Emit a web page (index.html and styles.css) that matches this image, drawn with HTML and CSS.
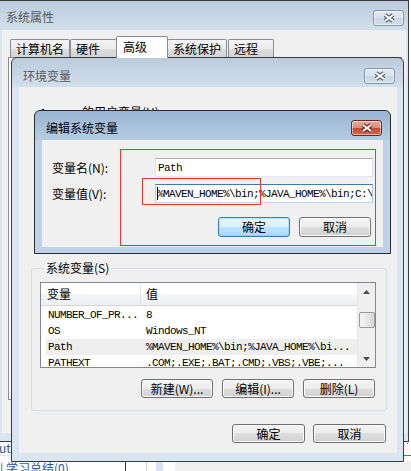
FILE: index.html
```html
<!DOCTYPE html>
<html lang="zh-CN">
<head>
<meta charset="utf-8">
<title>编辑系统变量</title>
<link rel="stylesheet" href="styles.css">
</head>
<body>
<div class="desktop">
  <div class="page">
    <div class="page-row1">
      <span class="page-link uts">uts</span>
      <span class="page-mark"><span class="page-dot"></span></span>
    </div>
    <div class="page-row2">
      <span class="page-link cell-a">| 学习总结(0)</span>
      <span class="cell-b"></span>
      <span class="cell-c"></span>
      <span class="cell-d"></span>
      <span class="cell-e"></span>
    </div>
  </div>

  <section class="win win-outer">
    <header class="titlebar">
      <span class="title">系统属性</span>
      <span class="close">
        <svg width="14" height="10" viewBox="0 0 14 10"><path d="M3 2 L11 8 M11 2 L3 8" stroke="#56606e" stroke-width="4.2"/><path d="M3 2 L11 8 M11 2 L3 8" stroke="#fff" stroke-width="2"/></svg>
      </span>
    </header>
    <div class="client outer-client">
      <div class="tabs">
        <span class="tab t1">计算机名</span>
        <span class="tab t2">硬件</span>
        <span class="tab t3 sel">高级</span>
        <span class="tab t4">系统保护</span>
        <span class="tab t5">远程</span>
      </div>
      <div class="tabpanel"></div>
    </div>
  </section>

  <section class="win win-env">
    <header class="titlebar">
      <span class="title">环境变量</span>
      <span class="close">
        <svg width="14" height="10" viewBox="0 0 14 10"><path d="M3 2 L11 8 M11 2 L3 8" stroke="#56606e" stroke-width="4.2"/><path d="M3 2 L11 8 M11 2 L3 8" stroke="#fff" stroke-width="2"/></svg>
      </span>
    </header>
    <div class="client env-client">
      <div class="user-group"><span class="mono">lenovo </span>的用户变量(U)</div>
      <fieldset class="sys-group">
        <legend>系统变量(S)</legend>
        <div class="listview">
          <div class="lv-main">
            <div class="lv-head">
              <span class="lv-h1">变量</span>
              <span class="lv-h2">值</span>
            </div>
            <div class="lv-rows">
              <div class="lv-row"><span>NUMBER_OF_PR...</span><span>8</span></div>
              <div class="lv-row"><span>OS</span><span>Windows_NT</span></div>
              <div class="lv-row hl"><span>Path</span><span>%MAVEN_HOME%\bin;%JAVA_HOME%\bi...</span></div>
              <div class="lv-row"><span>PATHEXT</span><span>.COM;.EXE;.BAT;.CMD;.VBS;.VBE;...</span></div>
            </div>
          </div>
          <div class="scrollbar">
            <span class="sb-btn"><svg width="7" height="4" viewBox="0 0 7 4"><path d="M0 4 L3.5 0 L7 4 Z" fill="#4d4d4d"/></svg></span>
            <span class="sb-track"><span class="sb-thumb"></span></span>
            <span class="sb-btn"><svg width="7" height="4" viewBox="0 0 7 4"><path d="M0 0 L7 0 L3.5 4 Z" fill="#4d4d4d"/></svg></span>
          </div>
        </div>
        <div class="btn-row group-btns">
          <span class="btn">新建(W)...</span>
          <span class="btn">编辑(I)...</span>
          <span class="btn">删除(L)</span>
        </div>
      </fieldset>
      <div class="btn-row env-btns">
        <span class="btn wide">确定</span>
        <span class="btn wide">取消</span>
      </div>
    </div>
  </section>

  <section class="win win-edit">
    <header class="titlebar">
      <span class="title">编辑系统变量</span>
      <span class="close red">
        <svg width="14" height="10" viewBox="0 0 14 10"><path d="M3 2 L11 8 M11 2 L3 8" stroke="#6a2a22" stroke-width="4.2"/><path d="M3 2 L11 8 M11 2 L3 8" stroke="#fff" stroke-width="2"/></svg>
      </span>
    </header>
    <div class="client edit-client">
      <div class="form">
        <span class="label">变量名(N):</span>
        <span class="input"><span class="mono">Path</span></span>
        <span class="label">变量值(V):</span>
        <span class="input focus"><span class="caret"></span><span class="mono">%MAVEN_HOME%\bin;%JAVA_HOME%\bin;C:\Windows\system32</span></span>
      </div>
      <div class="btn-row edit-btns">
        <span class="btn default">确定</span>
        <span class="btn">取消</span>
      </div>
    </div>
  </section>

  <div class="annot annot-big"></div>
  <div class="annot annot-small"></div>
</div>
</body>
</html>
```

FILE: styles.css
```css
* { box-sizing: border-box; }
html, body { margin: 0; padding: 0; background: #fff; overflow: hidden; }
body {
  width: 411px; height: 471px;
  font-family: "Noto Sans CJK SC", "Liberation Sans", sans-serif;
  font-size: 12px; color: #000;
}
.desktop { position: relative; width: 411px; height: 471px; overflow: hidden; }
.mono {
  font-family: "Liberation Mono", "DejaVu Sans Mono", monospace;
  font-size: 11px; letter-spacing: -0.6px;
}

/* background web page */
.page { display: flex; flex-direction: column; padding-top: 442px; }
.page-row1 { height: 14px; display: flex; justify-content: space-between; border-bottom: 1px solid #e4e4e4; }
.page-link { color: #2a57a3; line-height: 12px; }
.uts { margin-left: -1px; }
.page-mark { width: 7px; height: 14px; border-bottom: 1px solid #e23a3a; display: flex; justify-content: center; }
.page-dot { width: 1px; height: 1px; margin-top: 1px; background: #333; }
.page-row2 { display: flex; height: 15px; padding-top: 5px; }
.cell-a { width: 125px; line-height: 14px; }
.cell-b { width: 21px; border-left: 1px solid #333; }
.cell-c { width: 10px; border-left: 1px solid #cfcfcf; }
.cell-d { width: 7px; background: #d6e3f1; }
.cell-e { flex: 1; background: #f0f0f0; border-left: 12px solid #fff; }

/* windows */
.win {
  position: absolute;
  display: flex; flex-direction: column;
  border: 1px solid #3b3b3b;
}
.titlebar { flex: none; height: 29px; display: flex; justify-content: space-between; align-items: flex-start; }
.title { line-height: 14px; color: #5a5a5a; white-space: nowrap; }
.close {
  width: 31px; height: 16px;
  border: 1px solid #8797ab; border-radius: 3px;
  background: linear-gradient(#e3ebf4, #d5e1ee 50%, #c8d6e6 50%, #d0dcea);
  display: flex; align-items: center; justify-content: center;
  box-shadow: inset 0 0 0 1px rgba(255,255,255,0.5);
}
.close.red {
  border-color: #6b2a22;
  background: linear-gradient(#e9ab9c, #d98d7b 48%, #c54a33 52%, #cd6a55);
}
.client { background: #f0f0f0; }

.win-outer {
  left: 0; top: 0; width: 409px; height: 442px;
  border-left: none;
  background: linear-gradient(#bccbdc 0, #d2dfec 29px, #d9e5f1 30px, #d9e5f1);
}
.win-outer .titlebar { padding: 9px 4px 0 6px; }
.outer-client { flex: 1; margin: 0 2px 8px 2px; padding: 6px 0 0 6px; display: flex; flex-direction: column; }

.tabs { display: flex; align-items: flex-end; height: 21px; margin-left: 2px; }
.tab {
  height: 18px; line-height: 17px; padding-left: 5px;
  border: 1px solid #898c95; border-bottom: none; border-radius: 2px 2px 0 0;
  background: linear-gradient(#f5f5f5, #ececec 50%, #dedede 50%, #d3d3d3);
  white-space: nowrap;
}
.t1 { width: 60px; }
.t2 { width: 47px; }
.t3 { width: 52px; margin-left: -1px; }
.t4 { width: 60px; margin-left: -1px; }
.t5 { width: 46px; margin-left: 1px; }
.tab.sel { height: 22px; line-height: 19px; background: #fff; margin-bottom: -1px; position: relative; z-index: 1; padding-left: 6px; }
.tabpanel { height: 343px; margin-right: 4px; border: 1px solid #898c95; background: #fff; }

.win-env {
  left: 11px; top: 57px; width: 393px; height: 405px;
  border-radius: 6px 6px 0 0;
  background: linear-gradient(#bccbdc 0, #d2dfec 29px, #d9e5f1 30px, #d9e5f1);
}
.win-env .titlebar { padding: 10px 8px 0 11px; }
.win-env .title { margin-top: 1px; }
.env-client { flex: 1; margin: 0 6px 8px 7px; padding: 0 10px 0 12px; display: flex; flex-direction: column; }
.user-group { height: 174px; padding: 18px 0 0 9px; line-height: 14px; white-space: nowrap; }

.sys-group {
  margin: 0; min-width: 0;
  padding: 0 10px 12px 8px;
  border: 1px solid #d5dfe5; border-radius: 3px;
}
.sys-group legend { padding: 0 2px; margin-left: 4px; line-height: 14px; }

.listview {
  margin-top: 7px; height: 86px;
  border: 1px solid #828790; background: #fff;
  display: grid; grid-template-columns: 1fr 18px; overflow: hidden;
}
.lv-main { display: flex; flex-direction: column; overflow: hidden; }
.lv-head {
  flex: none; height: 23px; display: grid; grid-template-columns: 100px 1fr;
  background: linear-gradient(#ffffff, #ffffff 45%, #f3f4f6 55%, #eef0f2);
  border-bottom: 1px solid #d5d5d5;
  line-height: 22px;
}
.lv-h1 { padding-left: 6px; border-right: 1px solid #e2e3e5; }
.lv-h2 { padding-left: 5px; }
.lv-rows { padding-top: 1px; }
.lv-row {
  height: 16px; margin-left: 5px;
  display: grid; grid-template-columns: 100px 1fr;
  font-family: "Liberation Mono", "DejaVu Sans Mono", monospace;
  font-size: 11px; letter-spacing: -0.6px; line-height: 16px;
  white-space: nowrap;
}
.lv-row span:first-child { padding-left: 2px; }
.lv-row.hl { background: #eeeeee; }

.scrollbar {
  display: flex; flex-direction: column;
  background: #efefef; border-left: 1px solid #e6e6e6;
}
.sb-btn { height: 17px; display: flex; align-items: center; justify-content: center; }
.sb-track { flex: 1; padding-top: 12px; padding-left: 1px; }
.sb-thumb {
  display: block; width: 16px; height: 16px;
  border: 1px solid #9b9b9b; border-radius: 2px;
  background: linear-gradient(90deg, #f4f4f4, #e6e6e6 55%, #d6d6d6);
}

.btn-row { display: flex; justify-content: flex-end; }
.btn {
  width: 72px; height: 19px; line-height: 17px; text-align: center;
  border: 1px solid #707070; border-radius: 3px;
  background: linear-gradient(#f4f4f4, #ececec 50%, #dedede 50%, #d1d1d1);
  box-shadow: inset 0 0 0 1px #fbfbfb;
  white-space: nowrap;
}
.group-btns { margin-top: 11px; margin-right: 1px; gap: 9px; }
.env-btns { margin-top: 13px; margin-right: 1px; gap: 8px; }
.btn.wide { width: 73px; }

.win-edit {
  left: 34px; top: 110px; width: 357px; height: 144px;
  border-color: #2c2c2c;
  border-radius: 6px 6px 0 0;
  background: linear-gradient(#99b4d2 0, #b6cce4 29px, #bcd2ea 30px, #bcd2ea);
}
.win-edit .titlebar { padding: 9px 8px 0 11px; }
.win-edit .title { margin-top: 1px; color: #000; }
.edit-client { flex: 1; margin: 0 7px 6px 7px; padding: 18px 12px 0 10px; display: flex; flex-direction: column; }
.form { display: grid; grid-template-columns: 103px 218px; grid-template-rows: 19px 19px; row-gap: 7px; align-items: center; }
.label { line-height: 14px; }
.input {
  height: 19px; display: flex; align-items: center; overflow: hidden; white-space: nowrap;
  background: #fff; padding-left: 2px;
  border: 1px solid; border-color: #abadb3 #dbdfe6 #e3e9ef #e2e3ea;
  color: #000;
}
.input.focus { padding-left: 1px; border-color: #3d7bad #a4c9e3 #b7d9ed #b5cfe7; }
.caret { flex: none; width: 1px; height: 13px; background: #000; margin-right: -1px; }
.edit-btns { margin-top: 14px; gap: 9px; }
.edit-btns .btn { height: 20px; line-height: 18px; }
.btn.default {
  border-color: #3c7fb1;
  background: linear-gradient(#eaf6fd, #d9f0fc 50%, #bee6fd 50%, #a7d9f5);
  box-shadow: inset 0 0 0 1px #48d3fb55;
}

.annot { position: absolute; border: 1px solid #f23434; }
.annot-big { left: 120px; top: 149px; width: 256px; height: 97px; }
.annot-small { left: 142px; top: 178px; width: 119px; height: 27px; }
```
